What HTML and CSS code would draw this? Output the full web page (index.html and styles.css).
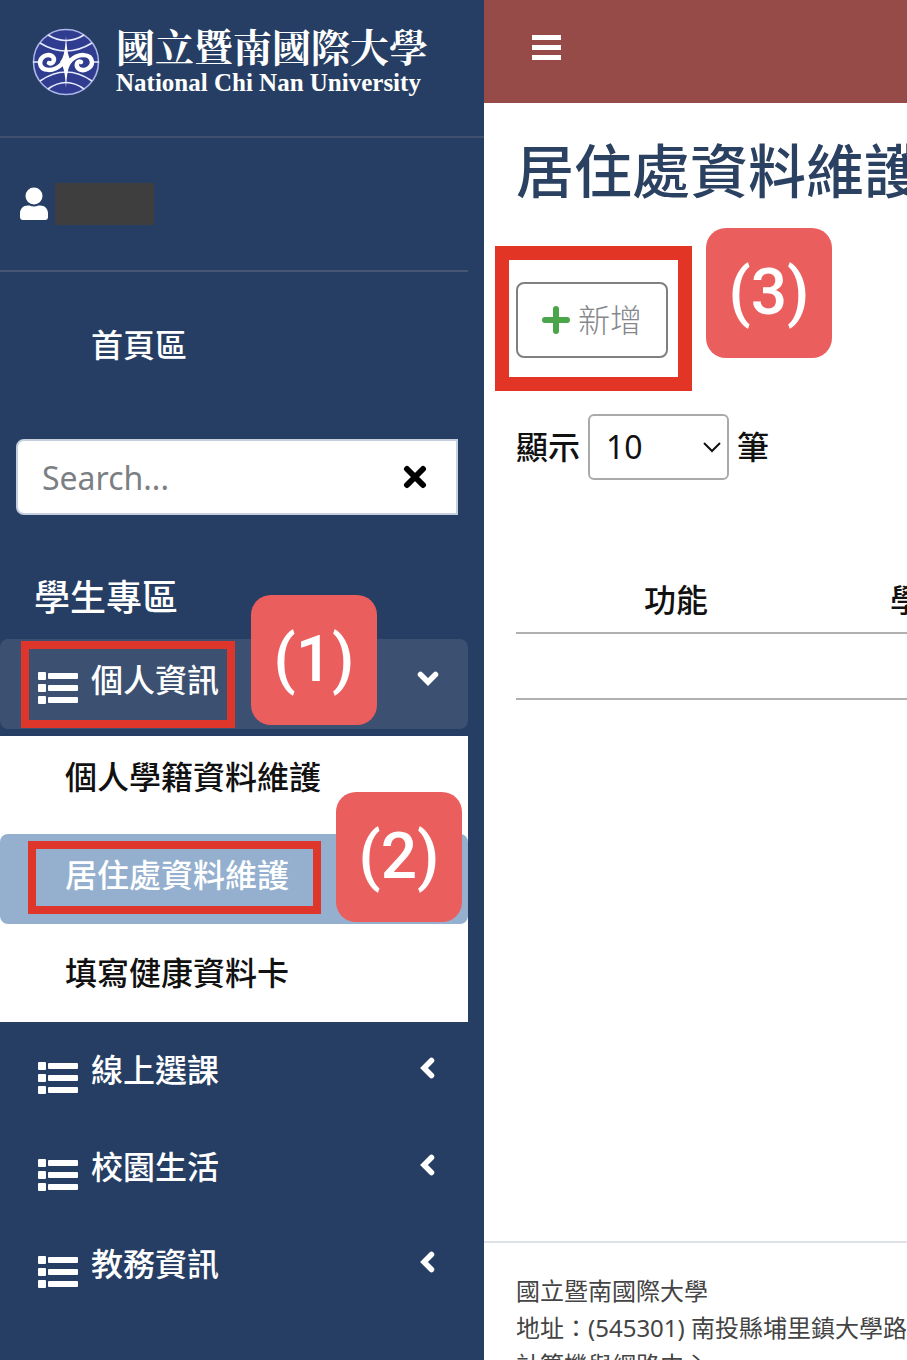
FILE: index.html
```html
<!DOCTYPE html>
<html lang="zh-Hant-TW">
<head>
    <meta charset="UTF-8">
    <meta name="viewport" content="width=device-width, initial-scale=1">
    <title>居住處資料維護</title>
    <link rel="stylesheet" href="styles.css">
</head>
<body>
    <!-- shared icons -->
    <svg class="sprite" aria-hidden="true">
        <symbol id="icon-list" viewBox="0 0 40 32">
            <rect x="0" y="0" width="8" height="8" rx="1"/>
            <rect x="10" y="1" width="30" height="6" rx="1"/>
            <rect x="0" y="12" width="8" height="8" rx="1"/>
            <rect x="10" y="13" width="30" height="6" rx="1"/>
            <rect x="0" y="24" width="8" height="8" rx="1"/>
            <rect x="10" y="25" width="30" height="6" rx="1"/>
        </symbol>
        <symbol id="icon-left" viewBox="0 0 22 22">
            <path d="M14.500 3.500 7 11l7.500 7.500" fill="none" stroke="currentColor" stroke-width="5.500" stroke-linecap="round"/>
        </symbol>
        <symbol id="icon-down" viewBox="0 0 22 22">
            <path d="M3.500 7.500 11 15l7.500-7.500" fill="none" stroke="currentColor" stroke-width="5.500" stroke-linecap="round"/>
        </symbol>
    </svg>

    <div class="wrapper">
        <aside class="sidebar">
            <a class="brand" href="#">
                <svg class="brand-logo" viewBox="0 0 68 68" aria-hidden="true">
                    <circle cx="34" cy="34" r="32.5" fill="#2f3c8f" stroke="#aab4e6" stroke-width="1.6"/>
                    <g fill="none" stroke="#e6ebff" stroke-width="1.6">
                        <path d="M16 7q18 11 36 0"/>
                        <path d="M8 15q26 16 52 0"/>
                        <path d="M16 61q18-13 36 0"/>
                        <path d="M8 53q26-18 52 0"/>
                        <path d="M1 34h6M61 34h6"/>
                    </g>
                    <g fill="none" stroke="#fff" stroke-width="4.500" stroke-linecap="round">
                        <path d="M17 35c4 2 7-4 3-7-5-3-12 1-12 7 1 9 14 9 22 1"/>
                        <path d="M49 34c-4-2-6 4-2 7 5 3 13-1 13-7-1-9-14-9-22-1"/>
                    </g>
                    <path d="M34 8c1 15 2 21 6 26-4 5-5 11-6 26-1-15-2-21-6-26 4-5 5-11 6-26z" fill="#fff"/>
                </svg>
                <span class="brand-text">
                    <span class="brand-zh">國立暨南國際大學</span>
                    <span class="brand-en">National Chi Nan University</span>
                </span>
            </a>

            <div class="user">
                <svg class="user-icon" viewBox="0 0 28 34" aria-hidden="true">
                    <circle cx="14" cy="9" r="8.5"/>
                    <path d="M8 18.5h1.5q4.500 2 9 0H20c5 0 8 3.500 8 8V30q0 3-3 3H3q-3 0-3-3v-3.500c0-4.500 3-8 8-8z"/>
                </svg>
                <span class="user-name"></span>
            </div>

            <a class="home-link" href="#">首頁區</a>

            <form class="search">
                <input class="search-input" type="text" placeholder="Search..." aria-label="Search">
                <button class="search-clear" type="reset" aria-label="Clear">
                    <svg viewBox="0 0 24 24" aria-hidden="true"><path d="M4 4l16 16M20 4 4 20"/></svg>
                </button>
            </form>

            <h2 class="nav-header">學生專區</h2>
            <nav class="nav">
                <div class="nav-row">
                    <a class="nav-link open" href="#">
                        <svg class="nav-icon" aria-hidden="true"><use href="#icon-list"/></svg>
                        <span>個人資訊</span>
                        <svg class="nav-arrow" aria-hidden="true"><use href="#icon-down"/></svg>
                    </a>
                    <span class="frame frame-1"></span>
                    <span class="badge badge-1">(1)</span>
                </div>
                <div class="submenu">
                    <a class="submenu-link" href="#">個人學籍資料維護</a>
                    <div class="nav-row">
                        <a class="submenu-link active" href="#">居住處資料維護</a>
                        <span class="frame frame-2"></span>
                        <span class="badge badge-2">(2)</span>
                    </div>
                    <a class="submenu-link" href="#">填寫健康資料卡</a>
                </div>
                <a class="nav-link" href="#">
                    <svg class="nav-icon" aria-hidden="true"><use href="#icon-list"/></svg>
                    <span>線上選課</span>
                    <svg class="nav-arrow" aria-hidden="true"><use href="#icon-left"/></svg>
                </a>
                <a class="nav-link" href="#">
                    <svg class="nav-icon" aria-hidden="true"><use href="#icon-list"/></svg>
                    <span>校園生活</span>
                    <svg class="nav-arrow" aria-hidden="true"><use href="#icon-left"/></svg>
                </a>
                <a class="nav-link" href="#">
                    <svg class="nav-icon" aria-hidden="true"><use href="#icon-list"/></svg>
                    <span>教務資訊</span>
                    <svg class="nav-arrow" aria-hidden="true"><use href="#icon-left"/></svg>
                </a>
            </nav>
        </aside>

        <div class="main">
            <header class="topbar">
                <button class="menu-btn" type="button" aria-label="Menu">
                    <svg viewBox="0 0 29 26" aria-hidden="true">
                        <path d="M0 0h29v5H0zM0 10h29v5H0zM0 20h29v5H0z"/>
                    </svg>
                </button>
            </header>

            <main class="content">
                <h1>居住處資料維護</h1>

                <div class="toolbar">
                    <button class="add-btn" type="button">
                        <svg viewBox="0 0 30 30" aria-hidden="true"><path d="M15 4v22M4 15h22"/></svg>
                        新增
                    </button>
                    <span class="frame frame-3"></span>
                    <span class="badge badge-3">(3)</span>
                </div>

                <div class="length">
                    <label for="length">顯示</label>
                    <span class="select-box">
                        <select id="length">
                            <option>10</option>
                            <option>25</option>
                            <option>50</option>
                        </select>
                        <svg viewBox="0 0 18 12" aria-hidden="true"><path d="M1 2l8 8 8-8"/></svg>
                    </span>
                    <span>筆</span>
                </div>

                <table class="data-table">
                    <thead>
                        <tr>
                            <th class="col-action">功能</th>
                            <th class="col-year">學</th>
                        </tr>
                    </thead>
                    <tbody>
                        <tr>
                            <td></td>
                            <td></td>
                        </tr>
                    </tbody>
                </table>
            </main>

            <footer class="footer">
                國立暨南國際大學<br>
                地址：(545301) 南投縣埔里鎮大學路<br>
                計算機與網路中心
            </footer>
        </div>
    </div>
</body>
</html>
```
FILE: styles.css
```css
* {
    box-sizing: border-box;
}
body {
    margin: 0;
    font-family: "Noto Sans", "Noto Sans CJK TC", sans-serif;
    font-size: 32px;
    line-height: 48px;
    color: #111;
    background-color: #fff;
}
a {
    color: inherit;
    text-decoration: none;
}
button, input, select {
    font: inherit;
}
.sprite {
    display: none;
}
.wrapper {
    display: flex;
    height: 100vh;
    overflow: hidden;
}

/* Sidebar */
.sidebar {
    flex: 0 0 484px;
    min-width: 0;
    background-color: #263e63;
    color: #fff;
    font-family: "Noto Sans CJK TC", sans-serif;
    font-weight: 500;
}
.brand {
    display: flex;
    align-items: flex-start;
    gap: 16px;
    height: 138px;
    padding: 24px 0 0 32px;
    border-bottom: 2px solid #41506d;
}
.brand-logo {
    flex: none;
    width: 68px;
    height: 68px;
    margin-top: 4px;
}
.brand-text {
    display: flex;
    flex-direction: column;
    white-space: nowrap;
}
.brand-zh {
    font-family: "Noto Serif CJK TC", "Noto Sans CJK TC", serif;
    font-size: 39px;
    font-weight: 700;
    line-height: 42px;
}
.brand-en {
    font-family: "Liberation Serif", serif;
    font-size: 25px;
    font-weight: bold;
    line-height: 34px;
}
.user {
    display: flex;
    align-items: center;
    gap: 7px;
    height: 134px;
    margin-right: 16px;
    padding-left: 20px;
    border-bottom: 2px solid #475672;
}
.user-icon {
    width: 28px;
    height: 34px;
    fill: #fff;
}
.user-name {
    width: 99px;
    height: 42px;
    background-color: #3e3e3e;
}
.home-link {
    display: block;
    padding: 47px 0 72px 91px;
}
.search {
    display: flex;
    align-items: center;
    height: 76px;
    margin: 0 26px 0 16px;
    background-color: #fff;
    border: 2px solid #c5cfe0;
    border-radius: 8px 0 0 8px;
}
.search-input {
    flex: 1;
    width: 100%;
    min-width: 0;
    height: 100%;
    padding: 0 0 0 24px;
    border: none;
    background: none;
    font-family: "Noto Sans", sans-serif;
    font-weight: 400;
    outline: none;
}
.search-input::placeholder {
    color: #7b7f84;
    opacity: 1;
}
.search-clear {
    display: flex;
    padding: 0;
    margin-right: 29px;
    border: none;
    background: none;
    cursor: pointer;
}
.search-clear svg {
    width: 24px;
    height: 24px;
    stroke: #000;
    stroke-width: 6;
    stroke-linecap: round;
}
.nav-header {
    margin: 0;
    padding: 53px 0 17px 34px;
    font-size: 36px;
    font-weight: 500;
    line-height: 54px;
}
.nav {
    display: flex;
    flex-direction: column;
    gap: 7px;
    margin-right: 16px;
}
.nav-row {
    position: relative;
}
.nav-link {
    display: flex;
    align-items: flex-start;
    gap: 13px;
    height: 90px;
    padding: 15px 29px 27px 38px;
    border-radius: 8px;
}
.nav-link.open {
    background-color: #3c5071;
}
.nav-icon {
    width: 40px;
    height: 32px;
    margin-top: 18px;
    fill: #fff;
}
.nav-arrow {
    width: 22px;
    height: 22px;
    margin-left: auto;
    align-self: center;
}
.submenu {
    display: flex;
    flex-direction: column;
    gap: 8px;
    background-color: #fff;
    color: #111;
}
.submenu-link {
    display: block;
    height: 90px;
    padding: 15px 0 27px 65px;
    border-radius: 8px;
}
.submenu-link.active {
    background-color: #94b0ce;
    color: #fff;
}

/* Step markers */
.frame {
    position: absolute;
    border: 8px solid #de362b;
    pointer-events: none;
}
.frame-1 {
    left: 21px;
    top: 2px;
    width: 214px;
    height: 87px;
}
.frame-2 {
    left: 28px;
    top: 7px;
    width: 293px;
    height: 73px;
}
.frame-3 {
    left: -21px;
    top: -36px;
    width: 197px;
    height: 145px;
    border: 14px solid #e33525;
}
.badge {
    position: absolute;
    z-index: 1;
    width: 126px;
    height: 130px;
    border-radius: 20px;
    background-color: #eb5e5e;
    color: #fff;
    font-family: Roboto, sans-serif;
    font-size: 64px;
    font-weight: 500;
    line-height: 130px;
    text-align: center;
}
.badge-1 {
    left: 251px;
    top: -44px;
}
.badge-2 {
    left: 336px;
    top: -42px;
}
.badge-3 {
    left: 190px;
    top: -54px;
}

/* Main area */
.main {
    flex: 1;
    min-width: 0;
    display: flex;
    flex-direction: column;
    overflow: hidden;
}
.topbar {
    flex: none;
    height: 103px;
    padding: 35px 0 0 48px;
    background-color: #964b49;
}
.menu-btn {
    display: flex;
    padding: 0;
    border: none;
    background: none;
    cursor: pointer;
}
.menu-btn svg {
    width: 29px;
    height: 26px;
    fill: #fff;
}
.content {
    flex: 1;
    padding: 33px 0 0 32px;
}
h1 {
    margin: 0 0 76px;
    color: #2b4161;
    font-size: 58px;
    font-weight: 500;
    line-height: 70px;
    white-space: nowrap;
}
.toolbar {
    position: relative;
    margin-bottom: 56px;
}
.add-btn {
    display: flex;
    align-items: center;
    gap: 7px;
    height: 76px;
    padding: 0 24px 0 23px;
    border: 2px solid #808080;
    border-radius: 8px;
    background-color: #fff;
    color: #85878c;
    font-weight: 300;
    cursor: pointer;
}
.add-btn svg {
    width: 30px;
    height: 30px;
    stroke: #4ba54b;
    stroke-width: 6;
    stroke-linecap: round;
}
.length {
    display: flex;
    align-items: center;
    gap: 8px;
    margin-bottom: 88px;
    font-weight: 500;
}
.select-box {
    position: relative;
}
.select-box select {
    display: block;
    width: 141px;
    height: 66px;
    padding: 0 16px;
    border: 2px solid #aaa;
    border-radius: 6px;
    background-color: #fff;
    color: #111;
    font-weight: 400;
    appearance: none;
}
.select-box svg {
    position: absolute;
    right: 8px;
    top: 27px;
    width: 18px;
    height: 12px;
    fill: none;
    stroke: #111;
    stroke-width: 2;
    pointer-events: none;
}
.data-table {
    width: 100%;
    table-layout: fixed;
    border-collapse: separate;
    border-spacing: 0;
}
.data-table th, .data-table td {
    height: 66px;
    padding: 0;
    border-bottom: 2px solid #b0b0b0;
    font-weight: 500;
}
.col-action {
    width: 320px;
}
.data-table .col-year {
    padding-left: 54px;
    text-align: left;
    white-space: nowrap;
}
.footer {
    flex: none;
    height: 119px;
    padding: 29px 0 0 32px;
    border-top: 2px solid #dee2e6;
    color: #444;
    font-size: 24px;
    line-height: 37px;
    white-space: nowrap;
}
```
